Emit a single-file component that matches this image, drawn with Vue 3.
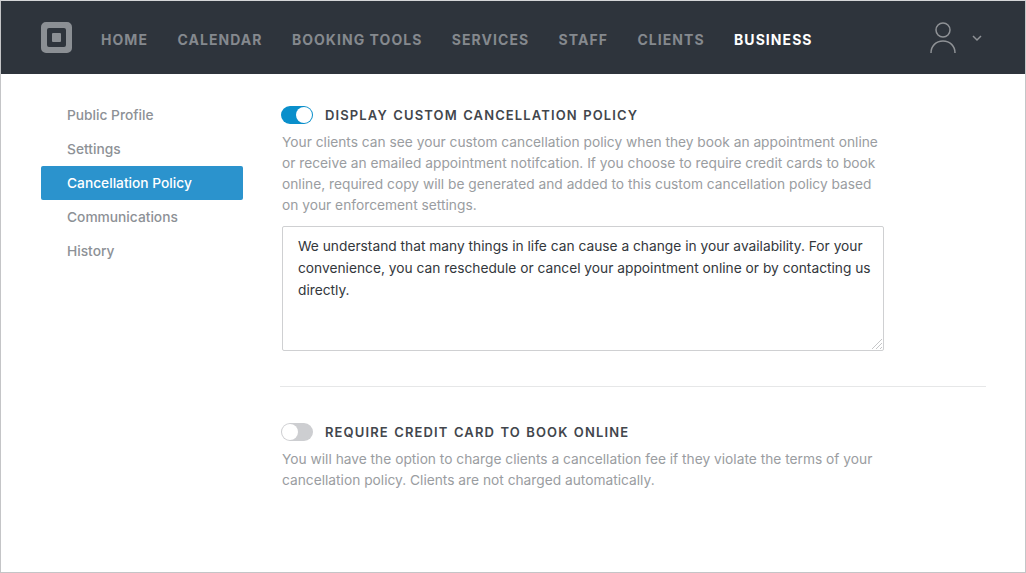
<script setup>
const nav = ['HOME', 'CALENDAR', 'BOOKING TOOLS', 'SERVICES', 'STAFF', 'CLIENTS', 'BUSINESS']
const side = ['Public Profile', 'Settings', 'Cancellation Policy', 'Communications', 'History']
</script>

<template>
  <div class="frame">
    <header class="top">
      <svg class="logo" width="32" height="32" viewBox="0 0 32 32">
        <path fill="#8b8f94" fill-rule="evenodd" d="M5 0h21a5 5 0 0 1 5 5v21a5 5 0 0 1-5 5H5a5 5 0 0 1-5-5V5a5 5 0 0 1 5-5zM8 6a2 2 0 0 0-2 2v15a2 2 0 0 0 2 2h15a2 2 0 0 0 2-2V8a2 2 0 0 0-2-2z"/>
        <rect x="11" y="11" width="9" height="9" rx="1" fill="#8b8f94"/>
      </svg>
      <nav class="nav">
        <span v-for="n in nav" :key="n" :class="{ on: n === 'BUSINESS' }">{{ n }}</span>
      </nav>
      <div class="user">
        <svg width="26" height="32" viewBox="0 0 26 32" fill="none" stroke="#8f9296" stroke-width="1.5">
          <circle cx="13" cy="8" r="7"/>
          <path d="M1 31c0-7 5-12 12-12s12 5 12 12"/>
        </svg>
        <svg class="chev" width="10" height="7" viewBox="0 0 10 7" fill="none" stroke="#8f9296" stroke-width="1.5">
          <path d="M1 1l4 4 4-4"/>
        </svg>
      </div>
    </header>
    <div class="body">
      <aside class="side">
        <a v-for="s in side" :key="s" :class="{ active: s === 'Cancellation Policy' }">{{ s }}</a>
      </aside>
      <main class="main">
        <section>
          <div class="head">
            <span class="toggle on"><i></i></span>
            <h2>DISPLAY CUSTOM CANCELLATION POLICY</h2>
          </div>
          <p>Your clients can see your custom cancellation policy when they book an appointment online<br>or receive an emailed appointment notifcation. If you choose to require credit cards to book<br>online, required copy will be generated and added to this custom cancellation policy based<br>on your enforcement settings.</p>
          <div class="area">
            <textarea readonly spellcheck="false">We understand that many things in life can cause a change in your availability. For your convenience, you can reschedule or cancel your appointment online or by contacting us directly.</textarea>
            <svg class="grip" width="12" height="12" viewBox="0 0 12 12" stroke="#c6c7c9" stroke-width="1">
              <path d="M1 11 11 1M5 11l6-6M9 11l2-2"/>
            </svg>
          </div>
        </section>
        <hr>
        <section>
          <div class="head">
            <span class="toggle"><i></i></span>
            <h2>REQUIRE CREDIT CARD TO BOOK ONLINE</h2>
          </div>
          <p>You will have the option to charge clients a cancellation fee if they violate the terms of your<br>cancellation policy. Clients are not charged automatically.</p>
        </section>
      </main>
    </div>
  </div>
</template>

<style>
html, body { margin: 0; background: #fff; }
</style>

<style scoped>
.frame {
  box-sizing: border-box;
  width: 1026px;
  height: 573px;
  border: 1px solid #c4c5c7;
  border-top-color: #d5d6d8;
  font-family: Inter, "Noto Sans", sans-serif;
  overflow: hidden;
}
.top {
  height: 73px;
  background: #2e343c;
  display: flex;
  align-items: center;
  padding: 0 40px;
}
.logo { flex: none; }
.nav {
  display: flex;
  gap: 29.4px;
  margin: 4px 0 0 28px;
  font-size: 14px;
  font-weight: 700;
  letter-spacing: 1.05px;
  color: #85898e;
}
.nav .on { color: #fff; }
.user {
  margin-left: auto;
  margin-right: 3px;
  display: flex;
  align-items: center;
  gap: 16px;
}
.chev { margin-top: 2px; }
.body { display: flex; }
.side {
  width: 202px;
  margin: 24px 0 0 40px;
  display: flex;
  flex-direction: column;
  flex: none;
}
.side a {
  height: 34px;
  line-height: 34px;
  padding-left: 26px;
  font-size: 13.75px;
  font-weight: 500;
  color: #8d9196;
  border-radius: 2px;
}
.side a.active { background: #2b93cd; color: #fff; }
.main {
  margin-left: 37px;
  width: 706px;
  padding-top: 32px;
}
.head {
  display: flex;
  align-items: center;
  gap: 12px;
  height: 18px;
  padding-left: 1px;
}
h2 {
  margin: 0;
  font-size: 13px;
  font-weight: 600;
  letter-spacing: 1.13px;
  word-spacing: 1px;
  color: #42464c;
}
.toggle {
  box-sizing: border-box;
  width: 32px;
  height: 18px;
  border-radius: 9px;
  background: #cdced1;
  padding: 1px;
  display: flex;
  flex: none;
}
.toggle i {
  width: 16px;
  height: 16px;
  border-radius: 50%;
  background: #fff;
}
.toggle.on { background: #0a8fcb; justify-content: flex-end; }
p {
  margin: 8px 0 0 2px;
  font-size: 13.75px;
  line-height: 21px;
  color: #9a9da1;
  white-space: nowrap;
}
.area {
  position: relative;
  width: 602px;
  height: 125px;
  margin: 10px 0 0 2px;
}
textarea {
  display: block;
  box-sizing: border-box;
  width: 100%;
  height: 100%;
  padding: 8px 10px 8px 15px;
  border: 1px solid #cfd0d2;
  border-radius: 2px;
  outline: none;
  resize: none;
  font: 13.75px/22px Inter, "Noto Sans", sans-serif;
  color: #33373c;
  background: #fff;
}
.grip {
  position: absolute;
  right: 1px;
  bottom: 1px;
}
hr {
  margin: 35px 0 36px;
  border: 0;
  border-top: 1px solid #e6e7e8;
}
</style>
